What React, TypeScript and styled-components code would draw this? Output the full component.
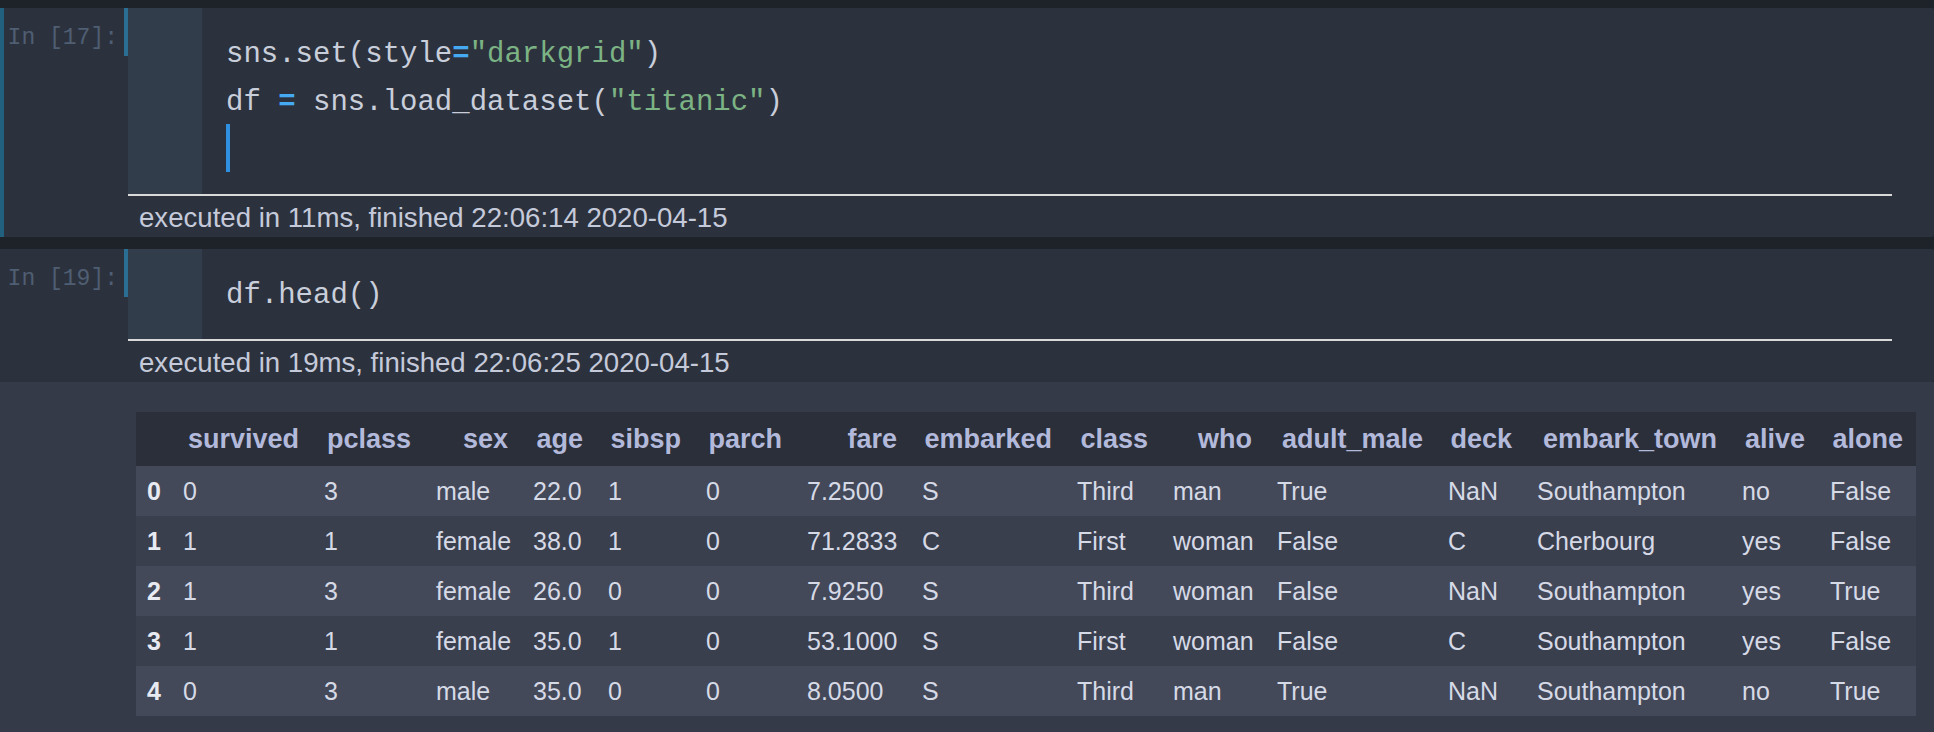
import * as React from 'react';
import styled, { createGlobalStyle } from 'styled-components';

const Colors = {
  page: '#1e2229',
  cell: '#2c323d',
  gutter: '#323d4b',
  selected: '#21607f',
  promptBar: '#2b6e93',
  prompt: '#4f5e72',
  code: '#c9cedb',
  string: '#7cb384',
  operator: '#45aaf2',
  cursor: '#2f8fe0',
  divider: '#d9d9d9',
  meta: '#c5cadb',
  output: '#343a48',
  tableHead: '#2a2f3a',
  rowOdd: '#434959',
  rowEven: '#393f4d',
  headText: '#b3b9da',
  bodyText: '#d6d9e6',
  indexText: '#e8eaf2',
};

const GlobalStyle = createGlobalStyle`
  html, body {
    margin: 0;
    padding: 0;
    background: ${Colors.page};
  }
  body {
    font-family: "Liberation Sans", Arial, sans-serif;
  }
`;

const Notebook = styled.main`
  display: flex;
  flex-direction: column;
  min-height: 100vh;
  box-sizing: border-box;
  padding-top: 8px;
  gap: 12px;
`;

const Cell = styled.section<{ $grow?: boolean }>`
  display: flex;
  flex-direction: column;
  flex: ${p => (p.$grow ? 1 : '0 0 auto')};
`;

const CellBody = styled.div<{ $selected?: boolean }>`
  display: flex;
  flex-direction: column;
  background: ${Colors.cell};
  border-left: ${p => (p.$selected ? `4px solid ${Colors.selected}` : 'none')};
  padding-left: ${p => (p.$selected ? 0 : 4)}px;
  border-radius: 0 2px 2px 0;
`;

const InputRow = styled.div`
  display: flex;
  flex-direction: row;
`;

const Prompt = styled.div`
  width: 124px;
  flex-shrink: 0;
`;

const PromptLabel = styled.div`
  height: 48px;
  box-sizing: border-box;
  padding: 18px 6px 0 0;
  border-right: 4px solid ${Colors.promptBar};
  text-align: right;
  font-family: "Liberation Mono", "DejaVu Sans Mono", monospace;
  font-size: 23px;
  line-height: 24px;
  color: ${Colors.prompt};
  white-space: pre;
`;

const InputColumn = styled.div`
  display: flex;
  flex-direction: column;
  flex: 1;
`;

const InputArea = styled.div`
  display: flex;
  flex-direction: row;
  margin-right: 42px;
  border-bottom: 2px solid ${Colors.divider};
`;

const Gutter = styled.div`
  width: 74px;
  flex-shrink: 0;
  background: ${Colors.gutter};
`;

const CodeBody = styled.div`
  padding: 20px 0 22px 24px;
  font-family: "Liberation Mono", "DejaVu Sans Mono", monospace;
  font-size: 29px;
  line-height: 54px;
  color: ${Colors.code};
  white-space: pre;
`;

const CodeLine = styled.div`
  height: 48px;
`;

const Str = styled.span`
  color: ${Colors.string};
`;

const Op = styled.span`
  color: ${Colors.operator};
  font-weight: bold;
`;

const Cursor = styled.span`
  display: inline-block;
  width: 4px;
  height: 48px;
  vertical-align: top;
  background: ${Colors.cursor};
`;

const Executed = styled.div`
  height: 41px;
  padding-left: 11px;
  font-size: 27.6px;
  line-height: 43px;
  color: ${Colors.meta};
  white-space: nowrap;
`;

const Output = styled.div`
  flex: 1;
  background: ${Colors.output};
  padding: 30px 0 14px 136px;
`;

const Frame = styled.table`
  border-collapse: collapse;
  table-layout: fixed;
  width: 1780px;
  font-family: "Liberation Sans", Arial, sans-serif;
  font-size: 25px;
  color: ${Colors.bodyText};
`;

const HeadRow = styled.tr`
  height: 54px;
  background: ${Colors.tableHead};
`;

const HeadCell = styled.th`
  padding: 0 13px 0 12px;
  text-align: right;
  font-size: 27px;
  font-weight: bold;
  color: ${Colors.headText};
  white-space: nowrap;
`;

const Row = styled.tr`
  height: 50px;
  &:nth-child(odd) {
    background: ${Colors.rowOdd};
  }
  &:nth-child(even) {
    background: ${Colors.rowEven};
  }
`;

const IndexCell = styled.th`
  padding: 0 0 0 11px;
  text-align: left;
  font-weight: bold;
  color: ${Colors.indexText};
`;

const DataCell = styled.td`
  padding: 0 12px;
  text-align: left;
  white-space: nowrap;
`;

const columns = [
  'survived', 'pclass', 'sex', 'age', 'sibsp', 'parch', 'fare', 'embarked',
  'class', 'who', 'adult_male', 'deck', 'embark_town', 'alive', 'alone',
];

// measured from the screenshot, index column first
const widths = [35, 141, 112, 97, 75, 98, 101, 115, 155, 96, 104, 171, 89, 205, 88, 98];

const rows = [
  ['0', '3', 'male', '22.0', '1', '0', '7.2500', 'S', 'Third', 'man', 'True', 'NaN', 'Southampton', 'no', 'False'],
  ['1', '1', 'female', '38.0', '1', '0', '71.2833', 'C', 'First', 'woman', 'False', 'C', 'Cherbourg', 'yes', 'False'],
  ['1', '3', 'female', '26.0', '0', '0', '7.9250', 'S', 'Third', 'woman', 'False', 'NaN', 'Southampton', 'yes', 'True'],
  ['1', '1', 'female', '35.0', '1', '0', '53.1000', 'S', 'First', 'woman', 'False', 'C', 'Southampton', 'yes', 'False'],
  ['0', '3', 'male', '35.0', '0', '0', '8.0500', 'S', 'Third', 'man', 'True', 'NaN', 'Southampton', 'no', 'True'],
];

const DataFrame = () => (
  <Frame>
    <colgroup>
      {widths.map((w, i) => <col key={i} style={{ width: w }} />)}
    </colgroup>
    <thead>
      <HeadRow>
        <HeadCell />
        {columns.map(c => <HeadCell key={c}>{c}</HeadCell>)}
      </HeadRow>
    </thead>
    <tbody>
      {rows.map((r, i) => (
        <Row key={i}>
          <IndexCell>{i}</IndexCell>
          {r.map((v, j) => <DataCell key={j}>{v}</DataCell>)}
        </Row>
      ))}
    </tbody>
  </Frame>
);

type CodeCellProps = {
  count: number;
  selected?: boolean;
  executed: string;
  children: React.ReactNode;
};

const CodeCell = ({ count, selected, executed, children }: CodeCellProps) => (
  <CellBody $selected={selected}>
    <InputRow>
      <Prompt>
        <PromptLabel>{`In [${count}]:`}</PromptLabel>
      </Prompt>
      <InputColumn>
        <InputArea>
          <Gutter />
          <CodeBody>{children}</CodeBody>
        </InputArea>
        <Executed>{executed}</Executed>
      </InputColumn>
    </InputRow>
  </CellBody>
);

const App = () => (
  <>
    <GlobalStyle />
    <Notebook>
      <Cell>
        <CodeCell count={17} selected executed="executed in 11ms, finished 22:06:14 2020-04-15">
          <CodeLine>sns.set(style<Op>=</Op><Str>"darkgrid"</Str>)</CodeLine>
          <CodeLine>df <Op>=</Op> sns.load_dataset(<Str>"titanic"</Str>)</CodeLine>
          <CodeLine><Cursor /></CodeLine>
        </CodeCell>
      </Cell>
      <Cell $grow>
        <CodeCell count={19} executed="executed in 19ms, finished 22:06:25 2020-04-15">
          <CodeLine>df.head()</CodeLine>
        </CodeCell>
        <Output>
          <DataFrame />
        </Output>
      </Cell>
    </Notebook>
  </>
);

export default App;
